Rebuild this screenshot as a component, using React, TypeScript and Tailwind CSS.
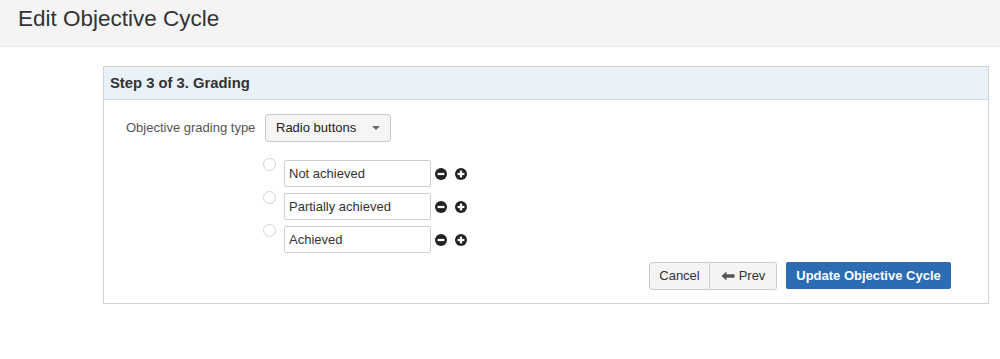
import React, { useState } from 'react';

const options = ['Not achieved', 'Partially achieved', 'Achieved'];

const MinusIcon = () => (
  <svg width="12" height="12" viewBox="0 0 12 12">
    <circle cx="6" cy="6" r="6" fill="#222" />
    <rect x="2.6" y="4.9" width="6.8" height="2.2" fill="#fff" />
  </svg>
);

const PlusIcon = () => (
  <svg width="12" height="12" viewBox="0 0 12 12">
    <circle cx="6" cy="6" r="6" fill="#222" />
    <rect x="2.6" y="4.9" width="6.8" height="2.2" fill="#fff" />
    <rect x="4.9" y="2.6" width="2.2" height="6.8" fill="#fff" />
  </svg>
);

const App = () => {
  const [values, setValues]: any = useState(options);

  return (
    <div className="min-h-[359px] bg-white text-[#333]" style={{ fontFamily: '"Liberation Sans", Arial, sans-serif' }}>
      <div className="h-[47px] bg-[#f4f4f4] border-b border-[#e6e6e6] pl-[18px] flex items-center">
        <h1 className="text-[22.5px] leading-none text-[#333] -mt-[8px]">Edit Objective Cycle</h1>
      </div>

      <div className="ml-[103px] mt-[19px] w-[886px] border border-[#d2d2d2] pb-[13px]">
        <div className="h-[33px] bg-[#e8f0f8] border-b border-[#d3dbe3] pl-[6px] flex items-center">
          <h2 className="text-[14.8px] font-bold text-[#333]">Step 3 of 3. Grading</h2>
        </div>

        <div className="pt-[14px] pl-[22px] pr-[37px]">
          <div className="flex items-center">
            <label className="w-[139px] text-[13px] text-[#555]">Objective grading type</label>
            <button className="h-[28px] w-[126px] border border-[#c8c8c8] rounded-[3px] bg-[#f5f5f5] pl-[10px] pr-[10px] flex items-center justify-between text-[13px] text-[#222]">
              <span>Radio buttons</span>
              <span className="w-0 h-0 border-l-[4px] border-r-[4px] border-t-[4px] border-l-transparent border-r-transparent border-t-[#666]" />
            </button>
          </div>

          <div className="ml-[137px] mt-[18px] flex flex-col gap-[6px]">
            {values.map((v: string, i: number) => (
              <div key={i} className="flex items-start">
                <span className="mt-[-2px] w-[13px] h-[13px] rounded-full border border-[#d4d4d4] bg-white" />
                <input
                  type="text"
                  value={v}
                  onChange={(e: any) => {
                    const next = [...values];
                    next[i] = e.target.value;
                    setValues(next);
                  }}
                  className="ml-[8px] h-[27px] w-[147px] border border-[#cfcfcf] rounded-[2px] px-[4px] text-[13px] text-[#333] outline-none"
                />
                <div className="ml-[4px] h-[27px] flex items-center gap-[8px]">
                  <MinusIcon />
                  <PlusIcon />
                </div>
              </div>
            ))}
          </div>

          <div className="mt-[9px] flex justify-end">
            <div className="flex">
              <button className="h-[28px] w-[61px] border border-[#cdcdcd] rounded-l-[3px] bg-[#f4f4f4] text-[13px] text-[#333]">
                Cancel
              </button>
              <button className="h-[28px] w-[67px] border border-l-0 border-[#cdcdcd] rounded-r-[3px] bg-[#f4f4f4] text-[13px] text-[#333] flex items-center justify-center gap-[4px]">
                <svg width="14" height="10" viewBox="0 0 14 10">
                  <path d="M0.5 5 L5.5 0.5 L5.5 3.3 L13.5 3.3 L13.5 6.7 L5.5 6.7 L5.5 9.5 Z" fill="#555" />
                </svg>
                <span>Prev</span>
              </button>
            </div>
            <button className="ml-[9px] h-[27px] w-[165px] rounded-[2px] bg-[#2b6cb3] text-white text-[13px] font-bold">
              Update Objective Cycle
            </button>
          </div>
        </div>
      </div>
    </div>
  );
};

export default App;
